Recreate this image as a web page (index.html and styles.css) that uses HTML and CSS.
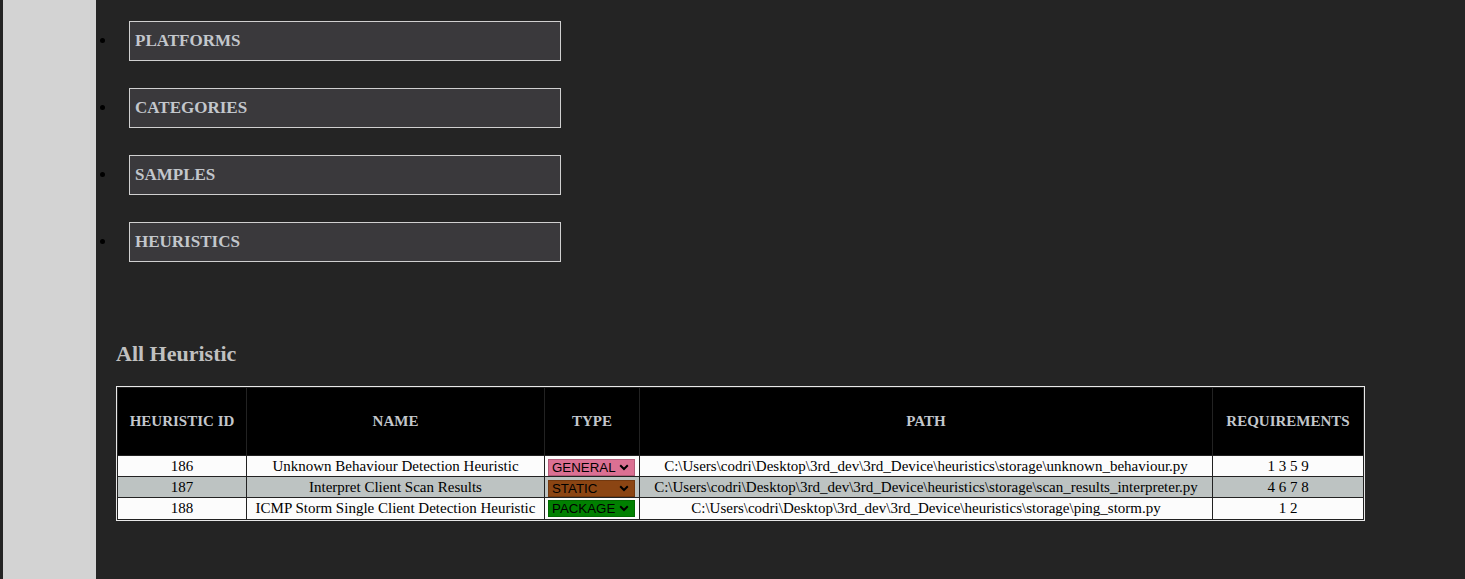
FILE: index.html
```html
<!DOCTYPE html>
<html>
<head>
<meta charset="utf-8">
<title>Heuristics</title>
<link rel="stylesheet" href="styles.css">
</head>
<body>
<div class="layout">
  <aside class="sidebar"></aside>
  <main class="main">
    <ul class="menu">
      <li><div class="menu-box">PLATFORMS</div></li>
      <li><div class="menu-box">CATEGORIES</div></li>
      <li><div class="menu-box">SAMPLES</div></li>
      <li><div class="menu-box">HEURISTICS</div></li>
    </ul>
    <h2 class="title">All Heuristic</h2>
    <div class="table-wrap">
      <table class="heur">
        <colgroup>
          <col class="c-id"><col class="c-name"><col class="c-type"><col class="c-path"><col class="c-req">
        </colgroup>
        <thead>
          <tr><th>HEURISTIC ID</th><th>NAME</th><th>TYPE</th><th>PATH</th><th>REQUIREMENTS</th></tr>
        </thead>
        <tbody>
          <tr class="row-light">
            <td>186</td>
            <td>Unknown Behaviour Detection Heuristic</td>
            <td class="type-cell"><span class="type-wrap"><select class="type-sel general"><option>GENERAL</option><option>STATIC</option><option>PACKAGE</option></select><svg class="chev" width="10" height="7" viewBox="0 0 10 7"><path d="M1.2 1.3 L5 5 L8.8 1.3" fill="none" stroke="#000" stroke-width="2"/></svg></span></td>
            <td>C:\Users\codri\Desktop\3rd_dev\3rd_Device\heuristics\storage\unknown_behaviour.py</td>
            <td>1 3 5 9</td>
          </tr>
          <tr class="row-grey">
            <td>187</td>
            <td>Interpret Client Scan Results</td>
            <td class="type-cell"><span class="type-wrap"><select class="type-sel static"><option>STATIC</option><option>GENERAL</option><option>PACKAGE</option></select><svg class="chev" width="10" height="7" viewBox="0 0 10 7"><path d="M1.2 1.3 L5 5 L8.8 1.3" fill="none" stroke="#000" stroke-width="2"/></svg></span></td>
            <td>C:\Users\codri\Desktop\3rd_dev\3rd_Device\heuristics\storage\scan_results_interpreter.py</td>
            <td>4 6 7 8</td>
          </tr>
          <tr class="row-light">
            <td>188</td>
            <td>ICMP Storm Single Client Detection Heuristic</td>
            <td class="type-cell"><span class="type-wrap"><select class="type-sel package"><option>PACKAGE</option><option>GENERAL</option><option>STATIC</option></select><svg class="chev" width="10" height="7" viewBox="0 0 10 7"><path d="M1.2 1.3 L5 5 L8.8 1.3" fill="none" stroke="#000" stroke-width="2"/></svg></span></td>
            <td>C:\Users\codri\Desktop\3rd_dev\3rd_Device\heuristics\storage\ping_storm.py</td>
            <td>1 2</td>
          </tr>
        </tbody>
      </table>
    </div>
  </main>
</div>
</body>
</html>
```

FILE: styles.css
```css
html, body {
  margin: 0;
  padding: 0;
  background: #242424;
  height: 100%;
}
body {
  font-family: "Liberation Serif", "Times New Roman", serif;
  padding-left: 3px;
  box-sizing: border-box;
}
.layout {
  display: flex;
  min-height: 100%;
}
.sidebar {
  width: 93px;
  flex: none;
  background: #d3d3d3;
}
.main {
  flex: 1;
  padding: 0 20px;
}
.menu {
  margin: 21px 0 0 1px;
  padding: 0;
  color: #000;
  font-size: 17px;
}
.menu li {
  margin-bottom: 27px;
}
.menu-box {
  width: 420px;
  margin-left: 12px;
  background: #3a393c;
  border: 1px solid #d0d0d0;
  padding: 10px 5px;
  line-height: 18px;
  font-weight: bold;
  color: #c3c7cc;
}
.title {
  margin: 78px 0 19px;
  font-size: 22px;
  line-height: 27px;
  color: #c0c0c0;
}
.table-wrap {
  width: 1247px;
  border: 1px solid #e8e8e8;
}
.heur {
  width: 100%;
  border-collapse: collapse;
  table-layout: fixed;
  font-size: 15px;
}
.c-id { width: 129px; }
.c-name { width: 298px; }
.c-type { width: 95px; }
.c-req { width: 151px; }
.heur th, .heur td {
  border: 1px solid #222;
  text-align: center;
  white-space: nowrap;
}
.heur th {
  background: #000;
  color: #c3c7cc;
  font-size: 15px;
  line-height: 17px;
  padding: 25px 4px;
}
.heur td {
  color: #000;
  padding: 1px 4px;
  line-height: 18px;
  height: 18px;
}
.row-light td { background: #fcfcfc; }
.row-grey td { background: #bdc3c2; }
.heur tbody tr:last-child td {
  padding-bottom: 2px;
}
.heur td.type-cell {
  text-align: left;
  padding: 0 3px;
}
.type-wrap {
  position: relative;
  display: inline-block;
  vertical-align: middle;
  line-height: 0;
}
.type-sel {
  -webkit-appearance: none;
  appearance: none;
  width: 87px;
  height: 17px;
  font-family: Arial, "Liberation Sans", sans-serif;
  font-size: 13.3px;
  line-height: 15px;
  color: #000;
  border: 1px solid rgba(0, 0, 0, 0.18);
  border-radius: 0;
  padding: 0 0 0 3px;
  margin: 0;
}
.type-sel.general { background-color: #db7093; }
.type-sel.static { background-color: #8b4513; }
.type-sel.package { background-color: #008000; }
.chev {
  position: absolute;
  right: 6px;
  top: 5px;
  pointer-events: none;
}
```
